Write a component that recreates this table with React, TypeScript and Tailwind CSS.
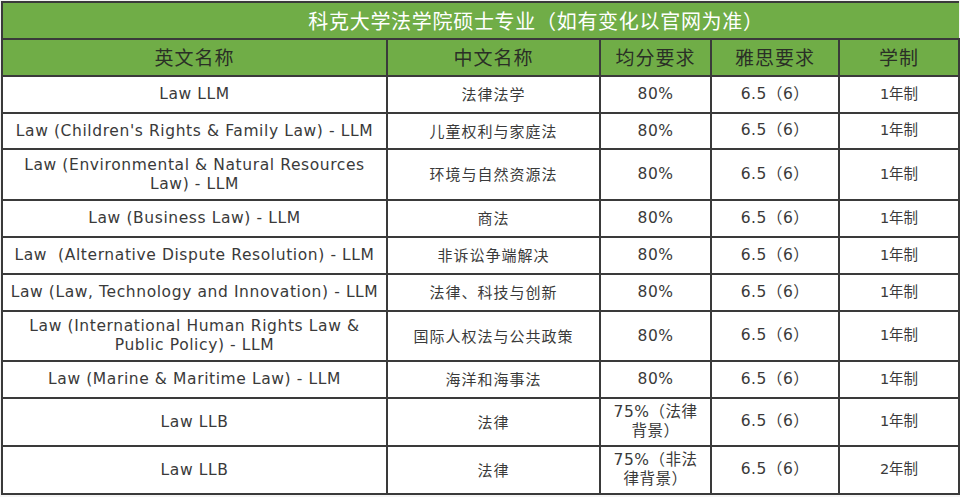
const rows = [
  { en: ["Law LLM"], cn: "法律法学", gpa: ["80%"], ielts: "6.5（6）", years: "1年制", h: "h-[37px]" },
  { en: ["Law (Children's Rights & Family Law) - LLM"], cn: "儿童权利与家庭法", gpa: ["80%"], ielts: "6.5（6）", years: "1年制", h: "h-[36px]" },
  { en: ["Law (Environmental & Natural Resources", "Law) - LLM"], cn: "环境与自然资源法", gpa: ["80%"], ielts: "6.5（6）", years: "1年制", h: "h-[51px]" },
  { en: ["Law (Business Law) - LLM"], cn: "商法", gpa: ["80%"], ielts: "6.5（6）", years: "1年制", h: "h-[37px]" },
  { en: ["Law  (Alternative Dispute Resolution) - LLM"], cn: "非诉讼争端解决", gpa: ["80%"], ielts: "6.5（6）", years: "1年制", h: "h-[37px]" },
  { en: ["Law (Law, Technology and Innovation) - LLM"], cn: "法律、科技与创新", gpa: ["80%"], ielts: "6.5（6）", years: "1年制", h: "h-[37px]" },
  { en: ["Law (International Human Rights Law &", "Public Policy) - LLM"], cn: "国际人权法与公共政策", gpa: ["80%"], ielts: "6.5（6）", years: "1年制", h: "h-[50px]" },
  { en: ["Law (Marine & Maritime Law) - LLM"], cn: "海洋和海事法", gpa: ["80%"], ielts: "6.5（6）", years: "1年制", h: "h-[37px]" },
  { en: ["Law LLB"], cn: "法律", gpa: ["75%（法律", "背景）"], ielts: "6.5（6）", years: "1年制", h: "h-[48px]" },
  { en: ["Law LLB"], cn: "法律", gpa: ["75%（非法", "律背景）"], ielts: "6.5（6）", years: "2年制", h: "h-[48px]" },
];

const sans = "font-['DejaVu_Sans','Noto_Sans_CJK_SC',sans-serif]";
const cjk = "font-['Noto_Sans_CJK_SC',sans-serif]";
const cell = "border-2 border-[#3a3a3a] text-center align-middle p-0";

export default function App() {
  return (
    <div className="w-[960px] h-[497px] bg-[#f4f4f4] overflow-hidden pl-[1px] pt-[1px]">
      <table className="border-collapse table-fixed w-[957px]">
        <colgroup>
          <col className="w-[385px]" />
          <col className="w-[213px]" />
          <col className="w-[111px]" />
          <col className="w-[128px]" />
          <col className="w-[120px]" />
        </colgroup>
        <thead>
          <tr className="h-[37px] bg-[#70ad47]">
            {/* 标题略偏右 */}
            <th colSpan={5} className={`${cell} border-r-0 pl-[110px] ${cjk} text-[20px] font-normal text-white tracking-[0.7px]`}>
              科克大学法学院硕士专业（如有变化以官网为准）
            </th>
          </tr>
          <tr className="h-[37px] bg-[#70ad47]">
            {["英文名称", "中文名称", "均分要求", "雅思要求", "学制"].map((t) => (
              <th key={t} className={`${cell} ${cjk} text-[19px] font-normal text-[#2a2f26] tracking-[1px]`}>
                {t}
              </th>
            ))}
          </tr>
        </thead>
        <tbody className="bg-white text-[#3a3a3a]">
          {rows.map((r, i) => (
            <tr key={i} className={r.h}>
              <td className={`${cell} ${sans} text-[15.5px] leading-[19px] tracking-[0.6px]`}>
                {r.en.map((l) => (
                  <div key={l} className="whitespace-pre">{l}</div>
                ))}
              </td>
              <td className={`${cell} ${cjk} text-[15px] tracking-[1px]`}>{r.cn}</td>
              <td className={`${cell} ${sans} text-[15.5px] leading-[19px] tracking-[0.5px]`}>
                {r.gpa.map((l) => (
                  <div key={l}>{l}</div>
                ))}
              </td>
              <td className={`${cell} ${sans} text-[15.5px] tracking-[0.5px]`}>{r.ielts}</td>
              <td className={`${cell} ${sans} text-[14.5px]`}>{r.years}</td>
            </tr>
          ))}
        </tbody>
      </table>
    </div>
  );
}
